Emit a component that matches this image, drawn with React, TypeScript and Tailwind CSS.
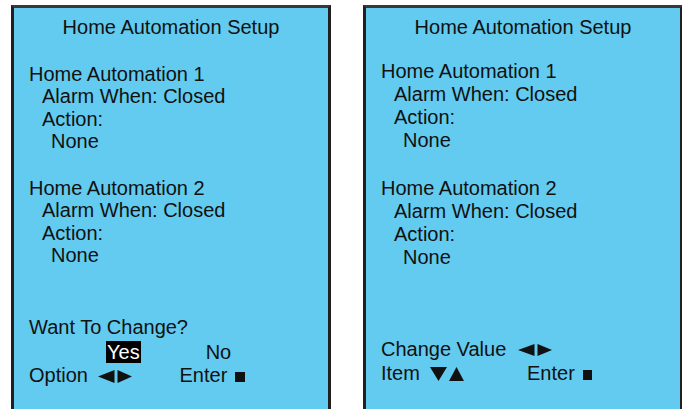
import React from "react";

const LeftRight = ({ h = 13 }: { h?: number }) => (
  <svg width="34" height={h} viewBox={`0 0 34 ${h}`} className="inline-block">
    <polygon points={`0,${h / 2} 16.5,0 16.5,${h}`} fill="#111" />
    <polygon points={`19.5,0 34,${h / 2} 19.5,${h}`} fill="#111" />
  </svg>
);

const DownUp = () => (
  <svg width="34" height="14" viewBox="0 0 34 14" className="inline-block">
    <polygon points="0,0 17,0 8.5,14" fill="#111" />
    <polygon points="19,14 34,14 26.5,0" fill="#111" />
  </svg>
);

const Square = ({ w = 10 }: { w?: number }) => (
  <span className="inline-block h-[10px] bg-[#111]" style={{ width: w }} />
);

export default function App() {
  return (
    <div className="w-[682px] h-[409px] overflow-hidden bg-white flex gap-[32px] pl-[11px] pt-[5px] font-['Liberation_Sans',Arial,sans-serif] text-[20px] text-[#111]">
      {/* Left panel */}
      <div className="w-[320px] h-[420px] shrink-0 bg-[#62cbef] border-[3px] border-[#231f20] border-t-[#3b3838] pt-[8px]">
        <div className="text-center leading-[22.5px]">Home Automation Setup</div>
        <div className="pl-[15px] leading-[22.5px]">
          <div className="mt-[24px]">Home Automation 1</div>
          <div className="ml-[13px]">Alarm When: Closed</div>
          <div className="ml-[13px]">Action:</div>
          <div className="ml-[22px]">None</div>
          <div className="mt-[24px]">Home Automation 2</div>
          <div className="ml-[13px]">Alarm When: Closed</div>
          <div className="ml-[13px]">Action:</div>
          <div className="ml-[22px]">None</div>
          <div className="mt-[49px]">Want To Change?</div>
          <div className="mt-[2.5px] leading-[23px]">
            <span className="ml-[77px] bg-black text-white px-[1px]">Yes</span>
            <span className="ml-[65px]">No</span>
          </div>
          <div className="whitespace-nowrap">
            <span className="inline-block w-[69px]">Option</span>
            <LeftRight />
            <span className="ml-[47.5px]">Enter</span>
            <span className="ml-[7.5px]">
              <Square />
            </span>
          </div>
        </div>
      </div>

      {/* Right panel */}
      <div className="w-[320px] h-[420px] shrink-0 bg-[#62cbef] border-[3px] border-[#231f20] border-t-[#3b3838] pt-[8px]">
        <div className="text-center leading-[22.5px]">Home Automation Setup</div>
        <div className="pl-[15px] leading-[23px]">
          <div className="mt-[21px]">Home Automation 1</div>
          <div className="ml-[13px]">Alarm When: Closed</div>
          <div className="ml-[13px]">Action:</div>
          <div className="ml-[22px]">None</div>
          <div className="mt-[25px]">Home Automation 2</div>
          <div className="ml-[13px]">Alarm When: Closed</div>
          <div className="ml-[13px]">Action:</div>
          <div className="ml-[22px]">None</div>
          <div className="mt-[69px] whitespace-nowrap">
            <span className="inline-block w-[136.5px]">Change Value</span>
            <LeftRight h={12} />
          </div>
          <div className="mt-[1px] whitespace-nowrap">
            <span className="inline-block w-[49px]">Item</span>
            <DownUp />
            <span className="ml-[63px]">Enter</span>
            <span className="ml-[8px]">
              <Square w={9} />
            </span>
          </div>
        </div>
      </div>
    </div>
  );
}
